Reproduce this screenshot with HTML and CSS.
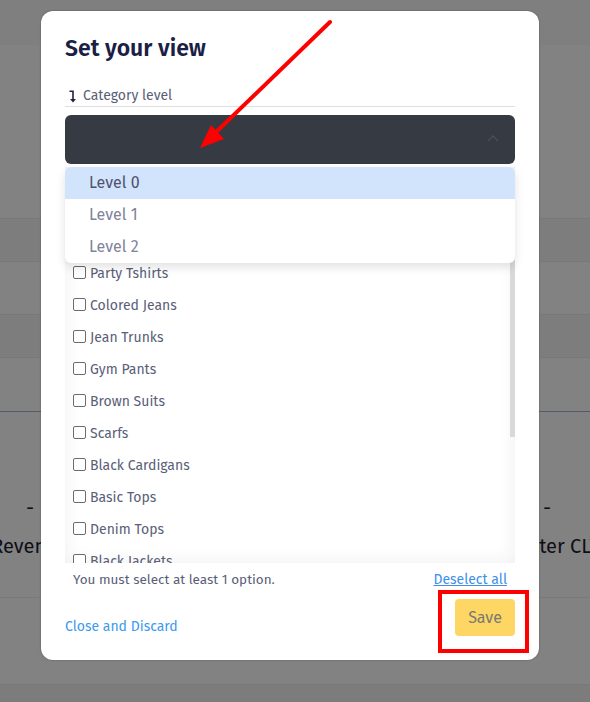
FILE: index.html
```html
<!DOCTYPE html>
<html>
<head>
<meta charset="utf-8">
<link rel="stylesheet" href="styles.css">
</head>
<body>
<div class="page">
  <div class="topbar"></div>
  <div class="band1"></div>
  <div class="row row-alt"></div>
  <div class="row"></div>
  <div class="row row-alt"></div>
  <div class="row row-last"></div>
  <div class="stats">
    <div class="stat stat-left"><div class="dash">-</div><div class="stat-label">Revenue</div></div>
    <div class="stat stat-right"><div class="dash">-</div><div class="stat-label">Counter CLV</div></div>
  </div>
  <div class="row row-foot"></div>
  <div class="bottom-band"></div>
</div>
<div class="overlay"></div>
<div class="modal">
  <h1 class="title">Set your view</h1>
  <div class="label">
    <svg class="label-icon" width="8" height="13" viewBox="0 0 8 13"><path d="M0.5 1.2 H4 V10.5" fill="none" stroke="#1f2340" stroke-width="1.6"/><path d="M1 9 L4 12.6 L7 9 Z" fill="#1f2340"/></svg>
    <span>Category level</span>
  </div>
  <div class="select-wrap">
    <div class="select">
      <svg class="chev" width="12" height="8" viewBox="0 0 12 8"><path d="M1 7 L6 2 L11 7" fill="none" stroke="#4a4e58" stroke-width="1.3"/></svg>
    </div>
    <div class="dropdown">
      <div class="opt opt-active">Level 0</div>
      <div class="opt">Level 1</div>
      <div class="opt">Level 2</div>
    </div>
  </div>
  <div class="list">
    <div class="list-inner">
      <label class="item"><span class="box"></span>Tshirts</label>
      <label class="item"><span class="box"></span>Plain Tshirts</label>
      <label class="item"><span class="box"></span>Party Tshirts</label>
      <label class="item"><span class="box"></span>Colored Jeans</label>
      <label class="item"><span class="box"></span>Jean Trunks</label>
      <label class="item"><span class="box"></span>Gym Pants</label>
      <label class="item"><span class="box"></span>Brown Suits</label>
      <label class="item"><span class="box"></span>Scarfs</label>
      <label class="item"><span class="box"></span>Black Cardigans</label>
      <label class="item"><span class="box"></span>Basic Tops</label>
      <label class="item"><span class="box"></span>Denim Tops</label>
      <label class="item"><span class="box"></span>Black Jackets</label>
    </div>
    <div class="scrollbar"></div>
  </div>
  <div class="msg-row">
    <span class="msg">You must select at least 1 option.</span>
    <a class="deselect">Deselect all</a>
  </div>
  <div class="actions">
    <a class="close">Close and Discard</a>
    <button class="save">Save</button>
  </div>
</div>
<div class="highlight"></div>
<svg class="arrow" width="590" height="702" viewBox="0 0 590 702">
  <path d="M330 22 L212 136" stroke="#ff0000" stroke-width="4" stroke-linecap="round" fill="none"/>
  <path d="M200 148 L211 125 L224 139 Z" fill="#ff0000"/>
</svg>
</body>
</html>
```

FILE: styles.css
```css
* { box-sizing: border-box; }
html, body { margin: 0; padding: 0; }
body {
  width: 590px;
  height: 702px;
  overflow: hidden;
  font-family: "Fira Sans", Roboto, "Noto Sans", sans-serif;
  background: #fafafa;
  position: relative;
}
.page { display: flex; flex-direction: column; overflow: hidden; width: 590px; }
.topbar { height: 45px; background: #f7f7f7; box-shadow: 0 2px 5px rgba(0,0,0,0.06); }
.band1 { height: 174px; background: #fdfdfd; border-bottom: 1px solid #ebebeb; }
.row { height: 53px; background: #fdfdfd; border-bottom: 1px solid #ebebeb; }
.row-alt { height: 43px; background: #f4f4f6; }
.row-last { height: 54px; border-bottom: 1px solid #9fb4cf; }
.stats { height: 186px; display: flex; justify-content: space-between; border-bottom: 1px solid #ebebeb; background: #fdfdfd; }
.stat { display: flex; flex-direction: column; align-items: center; padding-top: 83px; color: #1a1d2e; font-size: 20px; white-space: nowrap; }
.stat-left { width: 80px; margin-left: -10px; }
.stat-right { width: 120px; margin-right: -17px; }
.dash { line-height: 26px; }
.stat-label { margin-top: 12px; line-height: 26px; }
.row-foot { height: 87px; }
.bottom-band { height: 20px; background: #f2f2f2; }
.overlay { position: absolute; inset: 0; background: rgba(0,0,0,0.485); }
.modal {
  position: absolute;
  left: 41px; top: 11px;
  width: 498px; height: 649px;
  background: #fff;
  border-radius: 12px;
  box-shadow: 0 0 2px rgba(0,0,0,0.35);
  padding: 24px 24px 24px 24px;
  display: flex;
  flex-direction: column;
}
.title {
  margin: 0;
  font-size: 23px;
  font-weight: 600;
  color: #1b1f45;
  line-height: 26px;
}
.label {
  margin-top: 25px;
  display: flex;
  align-items: center;
  gap: 6px;
  font-size: 14px;
  color: #5a5e78;
  padding-left: 4px;
  padding-bottom: 1px;
  border-bottom: 1px solid #dedede;
  height: 21px;
}
.label-icon { margin-top: 1px; }
.select-wrap { position: relative; margin-top: 8px; }
.select {
  height: 49px;
  background: #363a42;
  border-radius: 6px;
  display: flex;
  align-items: center;
  justify-content: flex-end;
  padding-right: 16px;
}
.chev { margin-top: -3px; }
.dropdown {
  position: absolute;
  left: 0; right: 0; top: 52px;
  background: #fff;
  border-radius: 6px;
  box-shadow: 0 4px 10px rgba(0,0,0,0.12);
  overflow: hidden;
  z-index: 2;
}
.opt {
  height: 32px;
  line-height: 32px;
  padding-left: 24px;
  font-size: 16px;
  color: #80839a;
}
.opt-active { background: #d2e4fb; color: #4e5270; }
.list {
  margin-top: 3px;
  height: 396px;
  position: relative;
  overflow: hidden;
  background: #fff;
  box-shadow: inset 0 0 18px rgba(40,40,80,0.08);
}
.list-inner { padding-top: 26px; display: flex; flex-direction: column; }
.item {
  height: 32px;
  display: flex;
  align-items: center;
  padding-left: 8px;
  font-size: 14px;
  color: #5a5e78;
  gap: 4px;
}
.box {
  width: 13px; height: 13px;
  border: 1px solid #6a6a70;
  border-radius: 2px;
  background: #fff;
  margin-top: -2px;
}
.scrollbar {
  position: absolute;
  right: 0; top: 93px;
  width: 5px; height: 177px;
  background: #d9d9d9;
}
.msg-row {
  display: flex;
  justify-content: space-between;
  align-items: center;
  padding: 0 8px;
  height: 33px;
}
.msg { font-size: 13.5px; color: #5a5e78; }
.deselect { font-size: 14px; color: #3d8fe8; text-decoration: underline; }
.actions {
  margin-top: 3px;
  display: flex;
  justify-content: space-between;
  align-items: flex-end;
}
.close { font-size: 14px; color: #3d9aee; margin-bottom: 1px; }
.save {
  width: 60px; height: 37px;
  border: none;
  border-radius: 4px;
  background: #fdd663;
  color: #7a7a72;
  font-family: inherit;
  font-size: 16px;
}
.highlight {
  position: absolute;
  left: 438px; top: 590px;
  width: 91px; height: 63px;
  border: 4px solid #ff0000;
}
.arrow { position: absolute; left: 0; top: 0; pointer-events: none; }
```
